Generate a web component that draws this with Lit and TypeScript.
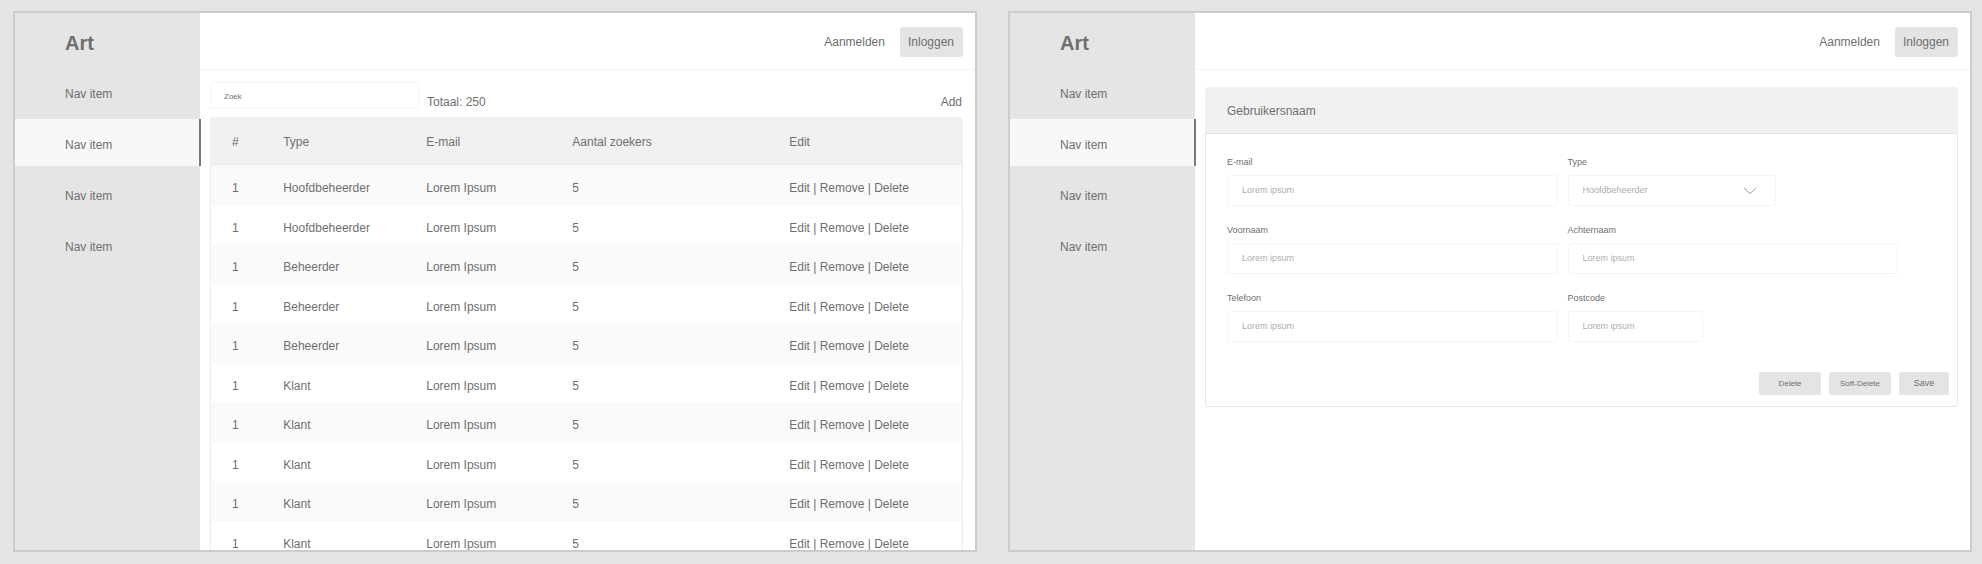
import { LitElement, html, css } from "lit";
import type { TemplateResult } from "lit";
import { customElement, property } from "lit/decorators.js";
import { classMap } from "lit/directives/class-map.js";

const shared = css`
  *,
  *::before,
  *::after {
    box-sizing: border-box;
  }
  a {
    color: inherit;
    text-decoration: none;
  }
  button,
  input,
  select {
    margin: 0;
    font-family: inherit;
    color: inherit;
  }
  button {
    padding: 0;
    border: 0;
    border-radius: 3px;
    background: #e4e4e4;
    cursor: pointer;
  }
  input,
  select {
    border: 1px solid #f5f5f5;
    border-radius: 3px;
    background: #fff;
    outline: none;
  }
  input::placeholder {
    color: inherit;
    opacity: 1;
  }
`;

interface Account {
  id: number;
  type: string;
  email: string;
  seekers: number;
}

const TYPES = [
  "Hoofdbeheerder",
  "Hoofdbeheerder",
  "Beheerder",
  "Beheerder",
  "Beheerder",
  "Klant",
  "Klant",
  "Klant",
  "Klant",
  "Klant",
];

const ACCOUNTS: Account[] = TYPES.map((type) => ({
  id: 1,
  type,
  email: "Lorem Ipsum",
  seekers: 5,
}));

/** Window shell: side navigation, top bar and a slot for the screen itself. */
@customElement("app-frame")
export class AppFrame extends LitElement {
  @property({ type: Number }) active = 1;

  static styles = [
    shared,
    css`
      :host {
        display: flex;
        min-width: 0;
        border: 2px solid #ccc;
        background: #fff;
        overflow: hidden;
      }
      .side {
        flex: 0 0 185px;
        background: #e5e5e5;
      }
      .brand {
        margin: 0;
        padding: 18px 50px 0;
        font-size: 20px;
        line-height: 24px;
        font-weight: 700;
      }
      .nav {
        display: flex;
        flex-direction: column;
        gap: 4px;
        padding-top: 13px;
      }
      .item {
        padding: 18px 50px 13px;
        line-height: 16px;
      }
      .active {
        margin-right: -1px;
        border-right: 2px solid #777;
        background: #f8f8f8;
      }
      .main {
        flex: 1;
        min-width: 0;
      }
      .top {
        display: flex;
        justify-content: flex-end;
        align-items: center;
        gap: 15px;
        height: 57px;
        padding: 2px 12px 0;
        border-bottom: 1px solid #f5f5f5;
      }
      .login {
        height: 30px;
        padding: 0 9px 0 8px;
        font-size: 12px;
      }
    `,
  ];

  render() {
    return html`
      <aside class="side">
        <h1 class="brand">Art</h1>
        <nav class="nav">
          ${[0, 1, 2, 3].map(
            (i) => html`<a
              href="#"
              class=${classMap({ item: true, active: i === this.active })}
              >Nav item</a
            >`
          )}
        </nav>
      </aside>
      <main class="main">
        <header class="top">
          <a href="#">Aanmelden</a>
          <button class="login" type="button">Inloggen</button>
        </header>
        <slot></slot>
      </main>
    `;
  }
}

/** Searchable list of accounts. */
@customElement("account-list")
export class AccountList extends LitElement {
  static styles = [
    shared,
    css`
      :host {
        display: block;
        padding: 12px 12px 0 10px;
      }
      .tools {
        display: flex;
        align-items: flex-end;
        gap: 8px;
        padding: 0 1px 7px 0;
        line-height: 16px;
      }
      .search {
        width: 209px;
        height: 27px;
        margin-bottom: 1px;
        padding: 2px 13px 0;
        font-size: 8px;
      }
      .add {
        margin-left: auto;
      }
      .table {
        width: 100%;
        table-layout: fixed;
        border-collapse: separate;
        border-spacing: 0;
        line-height: 16px;
      }
      .id {
        width: 6.8%;
      }
      .type {
        width: 19%;
      }
      .mail {
        width: 19.4%;
      }
      .seekers {
        width: 28.8%;
      }
      th {
        padding: 17px 0 14px 22px;
        border-bottom: 1px solid #ebebeb;
        background: #f1f1f1;
        font-weight: 400;
        text-align: left;
      }
      th:first-child {
        border-top-left-radius: 3px;
      }
      th:last-child {
        border-top-right-radius: 3px;
      }
      td {
        padding: 14px 0 8px 22px;
      }
      tr:nth-child(odd) td {
        padding-top: 15px;
        padding-bottom: 10px;
        background: #fafafa;
      }
      td:first-child {
        padding-left: 21px;
        border-left: 1px solid #ebebeb;
      }
      td:last-child {
        border-right: 1px solid #ebebeb;
      }
    `,
  ];

  private row(account: Account): TemplateResult {
    return html`<tr>
      <td>${account.id}</td>
      <td>${account.type}</td>
      <td>${account.email}</td>
      <td>${account.seekers}</td>
      <td><a href="#">Edit</a> | <a href="#">Remove</a> | <a href="#">Delete</a></td>
    </tr>`;
  }

  render() {
    return html`
      <div class="tools">
        <input class="search" type="text" placeholder="Zoek" aria-label="Zoek" />
        <span>Totaal: 250</span>
        <a class="add" href="#">Add</a>
      </div>
      <table class="table">
        <thead>
          <tr>
            <th class="id">#</th>
            <th class="type">Type</th>
            <th class="mail">E-mail</th>
            <th class="seekers">Aantal zoekers</th>
            <th>Edit</th>
          </tr>
        </thead>
        <tbody>
          ${ACCOUNTS.map((account) => this.row(account))}
        </tbody>
      </table>
    `;
  }
}

/** Edit form for one account. */
@customElement("account-form")
export class AccountForm extends LitElement {
  static styles = [
    shared,
    css`
      :host {
        display: block;
        padding: 17px 12px 0 10px;
      }
      .title {
        margin: 0;
        padding: 16px 22px 14px;
        border-radius: 3px 3px 0 0;
        background: #f1f1f1;
        font-size: 12px;
        line-height: 16px;
        font-weight: 400;
      }
      .body {
        padding-bottom: 11px;
        border: 1px solid #e4e4e4;
        border-radius: 0 0 3px 3px;
      }
      .fields {
        display: grid;
        grid-template-columns: 1fr 1fr;
        gap: 18px 10px;
        padding: 22px 59px 30px 21px;
      }
      .field {
        display: flex;
        flex-direction: column;
        gap: 7px;
        font-size: 9px;
      }
      .field label {
        line-height: 12px;
      }
      .control {
        position: relative;
        color: #adadad;
      }
      .control input,
      .control select {
        display: block;
        width: 100%;
        height: 31px;
        padding: 0 14px 2px;
        font-size: 9px;
        appearance: none;
      }
      .medium {
        width: 63%;
      }
      .short {
        width: 41%;
      }
      .chevron {
        position: absolute;
        top: 12px;
        right: 19px;
        width: 14px;
        height: 8px;
        fill: none;
        stroke: #999;
        pointer-events: none;
      }
      .actions {
        display: flex;
        justify-content: flex-end;
        gap: 8px;
        padding-right: 8px;
      }
      .actions button {
        width: 62px;
        height: 23px;
        padding-bottom: 1px;
        font-size: 8px;
      }
      .actions .save {
        width: 50px;
        font-size: 9px;
      }
    `,
  ];

  private text(id: string, label: string, size = ""): TemplateResult {
    return html`<div class="field">
      <label for=${id}>${label}</label>
      <div class="control ${size}">
        <input id=${id} type="text" placeholder="Lorem ipsum" />
      </div>
    </div>`;
  }

  render() {
    return html`
      <h2 class="title">Gebruikersnaam</h2>
      <form class="body">
        <div class="fields">
          ${this.text("email", "E-mail")}
          <div class="field">
            <label for="type">Type</label>
            <div class="control medium">
              <select id="type">
                <option>Hoofdbeheerder</option>
                <option>Beheerder</option>
                <option>Klant</option>
              </select>
              <svg class="chevron" viewBox="0 0 14 8" aria-hidden="true">
                <path d="M1 1 L7 6.5 L13 1" />
              </svg>
            </div>
          </div>
          ${this.text("first", "Voornaam")} ${this.text("last", "Achternaam")}
          ${this.text("phone", "Telefoon")} ${this.text("zip", "Postcode", "short")}
        </div>
        <div class="actions">
          <button type="button">Delete</button>
          <button type="button">Soft-Delete</button>
          <button class="save" type="button">Save</button>
        </div>
      </form>
    `;
  }
}

@customElement("app-root")
export class AppRoot extends LitElement {
  static styles = css`
    :host {
      box-sizing: border-box;
      display: grid;
      grid-template-columns: 1fr 1fr;
      gap: 31px;
      height: 100vh;
      padding: 11px 10px 12px 13px;
      background: #e4e4e4;
      color: #6f6f6f;
      font-family: "Liberation Sans", Arial, Helvetica, sans-serif;
      font-size: 12px;
    }
  `;

  render() {
    return html`
      <app-frame><account-list></account-list></app-frame>
      <app-frame><account-form></account-form></app-frame>
    `;
  }
}
